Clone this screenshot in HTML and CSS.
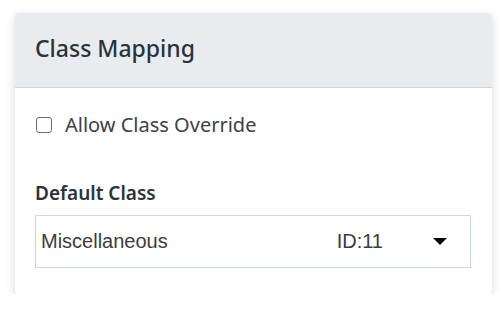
FILE: index.html
```html
<!DOCTYPE html>
<html lang="en">
<head>
  <meta charset="UTF-8">
  <title>Class Mapping</title>
  <link rel="stylesheet" href="styles.css">
</head>
<body>
  <div class="card">
    <div class="card-header">Class Mapping</div>
    <div class="card-body">
      <label class="check">
        <span class="check-box"></span>
        Allow Class Override
      </label>
      <div class="field-label">Default Class</div>
      <div class="select">
        <span class="select-name">Miscellaneous</span>
        <span class="select-id">ID:11</span>
        <span class="caret"></span>
      </div>
    </div>
  </div>
</body>
</html>
```

FILE: styles.css
```css
body {
  margin: 0;
  padding: 13px 10px 0 15px;
  background: #fff;
  font-family: 'Noto Sans', sans-serif;
  color: #2a333c;
}

.card {
  width: 477px;
  height: 281px;
  background: #fff;
  border-radius: 4px;
  box-shadow: 0 3px 10px rgba(0, 0, 0, 0.16);
  overflow: hidden;
}

.card-header {
  background: #e9ecef;
  border-bottom: 1px solid #cfd6dc;
  height: 75px;
  box-sizing: border-box;
  padding: 20px 20px 0;
  font-size: 23px;
  font-weight: 500;
  line-height: 31px;
}

.card-body {
  padding: 25px 21px 0 20px;
}

.check {
  display: flex;
  align-items: center;
  gap: 13px;
  font-size: 20px;
  color: #3a4148;
  line-height: 24px;
}

.check-box {
  width: 14px;
  height: 14px;
  border: 1.5px solid #6b6f74;
  border-radius: 3px;
  margin-left: 1px;
}

.field-label {
  margin-top: 43px;
  font-size: 19px;
  font-weight: 600;
  line-height: 26px;
}

.select {
  margin-top: 9px;
  height: 53px;
  box-sizing: border-box;
  border: 1px solid #ccd8de;
  display: flex;
  align-items: center;
  padding: 0 23px 0 5px;
  font-family: 'Liberation Sans', Arial, sans-serif;
  font-size: 20px;
  color: #3c3c3c;
}

.select-name {
  flex: 1;
}

.select-id {
  margin-right: 50px;
}

.caret {
  width: 0;
  height: 0;
  border-left: 7px solid transparent;
  border-right: 7px solid transparent;
  border-top: 7px solid #000;
}
```
